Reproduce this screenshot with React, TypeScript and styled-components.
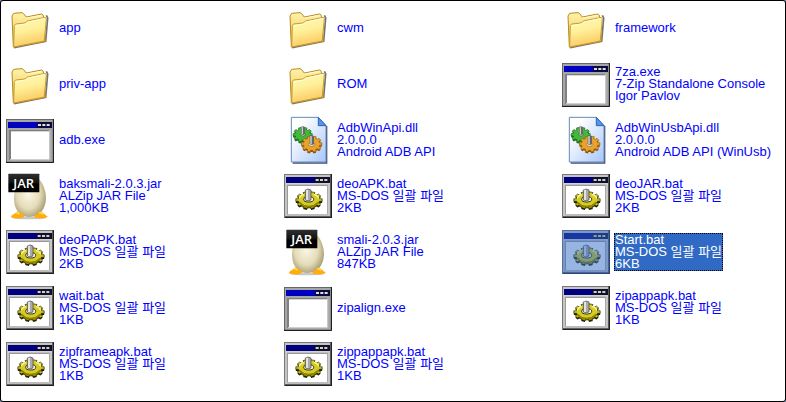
import React from "react";
import styled, { createGlobalStyle } from "styled-components";

const GlobalStyle = createGlobalStyle`
  * { box-sizing: border-box; }
  html, body, #root { height: 100%; }
  body { margin: 0; background: #6c8ccc; }
`;

const Pane = styled.main`
  min-height: 100%;
  background: #ffffff;
  box-shadow: inset 0 0 0 1px #000000;
  border-radius: 3px;
  font-family: "Liberation Sans", "Noto Sans CJK KR", sans-serif;
  font-size: 13px;
  line-height: 12px;
`;

const FileGrid = styled.ul`
  display: grid;
  grid-template-columns: repeat(3, minmax(0, 1fr));
  column-gap: 56px;
  grid-auto-rows: 56px;
  margin: 0;
  padding: 0 2px 0 6px;
  list-style: none;
`;

const Cell = styled.li`
  display: flex;
  align-items: center;
`;

const Tile = styled.button`
  display: flex;
  align-items: center;
  gap: 4px;
  padding: 0;
  border: 0;
  background: none;
  font: inherit;
  text-align: left;
  cursor: default;
`;

const Glyph = styled.svg`
  flex: none;
  width: 48px;
  height: 48px;
`;

const Label = styled.span<{ $selected: boolean }>`
  display: flex;
  flex-direction: column;
  border: 1px dotted ${(p) => (p.$selected ? "#000000" : "transparent")};
  background: ${(p) => (p.$selected ? "#316ac5" : "transparent")};
  color: ${(p) => (p.$selected ? "#ffffff" : "#0000ff")};
  white-space: nowrap;
`;

type Kind = "folder" | "exe" | "bat" | "dll" | "jar";

function gearPath(cx: number, cy: number, rx: number, ry: number, teeth: number) {
  const points: string[] = [];
  const step = (Math.PI * 2) / teeth;
  for (let i = 0; i < teeth; i++) {
    const shape: [number, number][] = [[-0.3, 0.8], [-0.24, 1], [0.24, 1], [0.3, 0.8]];
    shape.forEach(([turn, r]) => {
      const a = (i + turn) * step;
      points.push(`${(cx + Math.cos(a) * rx * r).toFixed(1)} ${(cy + Math.sin(a) * ry * r).toFixed(1)}`);
    });
  }
  return `M${points.join("L")}Z`;
}

function Folder() {
  return (
    <>
      <defs>
        <linearGradient id="folderFront" x1="0" y1="0" x2="0.25" y2="1">
          <stop offset="0" stopColor="#fffbb8" />
          <stop offset="0.5" stopColor="#fff09a" />
          <stop offset="1" stopColor="#fccb63" />
        </linearGradient>
        <linearGradient id="folderBack" x1="0" y1="0" x2="0" y2="1">
          <stop offset="0" stopColor="#fff3a8" />
          <stop offset="1" stopColor="#e9bd4e" />
        </linearGradient>
      </defs>
      <path d="M24 131L119 112L125 42L121 34" fill="none" stroke="#444444" strokeOpacity="0.75" strokeWidth="5" />
      <path d="M18 36L23 28L48 26L53 29L61 39L107 30L112 34L113 44L118 112L22 129Z" fill="url(#folderBack)" stroke="#b8891d" strokeWidth="3" strokeLinejoin="round" />
      <path d="M62 42L106 34" stroke="#fffbd1" strokeWidth="3" />
      <path d="M23 129L25 64L29 60L57 57L65 51L118 40L121 44L115 109L111 112Z" fill="url(#folderFront)" stroke="#c89b2c" strokeWidth="3" strokeLinejoin="round" />
      <path d="M28 66L58 60L67 54L117 43" fill="none" stroke="#fffddc" strokeWidth="3" />
    </>
  );
}

function Gear({ cx, cy, rx, ry, color, edge }: { cx: number; cy: number; rx: number; ry: number; color: string; edge: string }) {
  return (
    <>
      <path d={gearPath(cx, cy + 5, rx, ry, 10)} fill={edge} />
      <path d={gearPath(cx, cy, rx, ry, 10)} fill={color} stroke={edge} strokeWidth="2" />
    </>
  );
}

function BatWindow() {
  return (
    <>
      <rect x="0" y="6" width="144" height="132" fill="#777777" />
      <rect x="3" y="9" width="135" height="123" fill="#c5c5c5" />
      <path d="M142 6V136H3" fill="none" stroke="#222222" strokeWidth="4" />
      <rect x="6" y="15" width="132" height="18" fill="#00007f" />
      <path d="M92 15H138V33H92Z" fill="#101028" />
      <path d="M95 21H104V27H95ZM108 21H117V27H108ZM121 21H130V27H121Z" fill="#d0d0d0" />
      <rect x="6" y="34" width="132" height="4" fill="#d8d8d8" />
      <rect x="9" y="38" width="125" height="94" fill="#999999" />
      <rect x="12" y="42" width="117" height="84" fill="#ffffff" />
      <path d="M133 39V129H9" fill="none" stroke="#c8c8c8" strokeWidth="4" />
    </>
  );
}

function Exe() {
  return (
    <>
      <rect x="0" y="9" width="144" height="132" fill="#666666" />
      <rect x="3" y="12" width="138" height="126" fill="#a6a6a6" />
      <path d="M142 9V139H0" fill="none" stroke="#111111" strokeWidth="3" />
      <rect x="6" y="18" width="132" height="18" fill="#0000bf" />
      <path d="M93 18H138V36H93Z" fill="#0a0a3c" />
      <path d="M96 24H105V30H96ZM109 24H118V30H109ZM122 24H131V30H122Z" fill="#e0e0e0" />
      <rect x="9" y="42" width="123" height="90" fill="#808080" />
      <rect x="15" y="46" width="114" height="84" fill="#ffffff" />
      <path d="M131 43V131H12" fill="none" stroke="#d6d6d6" strokeWidth="3" />
    </>
  );
}

function Bat() {
  return (
    <>
      <BatWindow />
      <Gear cx={75} cy={84} rx={40} ry={25} color="#d6cb24" edge="#242400" />
      <ellipse cx="74" cy="82" rx="15" ry="8" fill="#ffffff" stroke="#302e00" strokeWidth="3" />
      <path d="M45 79Q50 69 61 67M89 67Q100 69 105 79" fill="none" stroke="#fffb7a" strokeWidth="4" />
      <path d="M47 92L58 101L74 104L91 101L103 92" fill="none" stroke="#8d8300" strokeWidth="6" />
      <path d="M64 54Q72 48 81 54V84Q73 89 64 84Z" fill="#aaaaaa" stroke="#444444" strokeWidth="2" />
      <path d="M69 53V84" stroke="#eeeeee" strokeWidth="5" />
    </>
  );
}

function Dll() {
  return (
    <>
      <defs>
        <linearGradient id="page" x1="0" y1="0" x2="1" y2="1">
          <stop offset="0.2" stopColor="#ffffff" />
          <stop offset="1" stopColor="#a6c6fb" />
        </linearGradient>
      </defs>
      <path d="M26 141H128V30" fill="none" stroke="#444f70" strokeWidth="4" />
      <path d="M22 4H103L126 29V138H22Z" fill="url(#page)" stroke="#6788bd" strokeWidth="3" />
      <path d="M103 4L126 29H103Z" fill="#4f98f1" stroke="#2f61b4" strokeWidth="3" />
      <Gear cx={56} cy={56} rx={29} ry={22} color="#43b83b" edge="#176c1a" />
      <ellipse cx="57" cy="55" rx="7" ry="5" fill="#e5f1e3" stroke="#17701c" strokeWidth="2" />
      <path d="M51 33Q56 28 63 33V55Q57 59 51 55Z" fill="#666666" />
      <path d="M55 33V55" stroke="#cccccc" strokeWidth="4" />
      <Gear cx={83} cy={84} rx={31} ry={24} color="#e7a32d" edge="#8f5807" />
      <ellipse cx="83" cy="85" rx="9" ry="6" fill="#fff4d5" stroke="#8f5807" strokeWidth="2" />
      <path d="M77 61Q83 56 90 61V85Q83 89 77 85Z" fill="#666666" />
      <path d="M81 60V85" stroke="#dddddd" strokeWidth="4" />
    </>
  );
}

function Jar() {
  return (
    <>
      <defs>
        <radialGradient id="egg" cx="0.45" cy="0.45" r="0.6">
          <stop offset="0" stopColor="#fbf7e6" />
          <stop offset="0.6" stopColor="#e4dcb9" />
          <stop offset="1" stopColor="#a59b70" />
        </radialGradient>
        <linearGradient id="tag" x1="0" y1="0" x2="0" y2="1">
          <stop offset="0" stopColor="#303030" />
          <stop offset="0.5" stopColor="#111111" />
          <stop offset="0.55" stopColor="#000000" />
        </linearGradient>
      </defs>
      <ellipse cx="70" cy="138" rx="50" ry="4" fill="#c8c8c8" />
      <path d="M70 8C102 8 120 47 120 79C119 114 99 135 71 135C43 135 24 114 24 80C24 47 40 8 70 8Z" fill="url(#egg)" />
      <path d="M15 136C16 126 28 127 32 119C43 117 46 127 56 132C54 141 22 141 15 136Z" fill="#ffad0d" />
      <path d="M84 136C86 129 96 127 101 119C112 118 113 127 125 133C124 141 91 141 84 136Z" fill="#ffad0d" />
      <path d="M29 123Q36 120 40 127M99 123Q107 120 111 127" fill="none" stroke="#ffe463" strokeWidth="4" />
      <rect x="7" y="5" width="93" height="56" rx="2" fill="url(#tag)" />
      <text x="53" y="47" textAnchor="middle" fontFamily="Open Sans, sans-serif" fontSize="39" fontWeight="600" fill="#ffffff">JAR</text>
    </>
  );
}

const drawings: Record<Kind, () => React.ReactElement> = {
  folder: Folder,
  exe: Exe,
  bat: Bat,
  dll: Dll,
  jar: Jar,
};

interface Entry {
  kind: Kind;
  lines: string[];
}

const bat = (name: string, size: string): Entry => ({ kind: "bat", lines: [name, "MS-DOS 일괄 파일", size] });

const entries: Entry[] = [
  { kind: "folder", lines: ["app"] },
  { kind: "folder", lines: ["cwm"] },
  { kind: "folder", lines: ["framework"] },
  { kind: "folder", lines: ["priv-app"] },
  { kind: "folder", lines: ["ROM"] },
  { kind: "exe", lines: ["7za.exe", "7-Zip Standalone Console", "Igor Pavlov"] },
  { kind: "exe", lines: ["adb.exe"] },
  { kind: "dll", lines: ["AdbWinApi.dll", "2.0.0.0", "Android ADB API"] },
  { kind: "dll", lines: ["AdbWinUsbApi.dll", "2.0.0.0", "Android ADB API (WinUsb)"] },
  { kind: "jar", lines: ["baksmali-2.0.3.jar", "ALZip JAR File", "1,000KB"] },
  bat("deoAPK.bat", "2KB"),
  bat("deoJAR.bat", "2KB"),
  bat("deoPAPK.bat", "2KB"),
  { kind: "jar", lines: ["smali-2.0.3.jar", "ALZip JAR File", "847KB"] },
  bat("Start.bat", "6KB"),
  bat("wait.bat", "1KB"),
  { kind: "exe", lines: ["zipalign.exe"] },
  bat("zipappapk.bat", "1KB"),
  bat("zipframeapk.bat", "1KB"),
  bat("zippappapk.bat", "1KB"),
];

export default function App() {
  const [selected, setSelected] = React.useState("Start.bat");
  return (
    <>
      <GlobalStyle />
      <Pane>
        <FileGrid>
          {entries.map(({ kind, lines }) => {
            const Drawing = drawings[kind];
            const active = lines[0] === selected;
            return (
              <Cell key={lines[0]}>
                <Tile type="button" aria-pressed={active} onClick={() => setSelected(lines[0])}>
                  <Glyph viewBox="0 0 144 144" aria-hidden="true">
                    <Drawing />
                    {active && <rect x="0" y="6" width="144" height="132" fill="#316ac5" fillOpacity="0.5" />}
                  </Glyph>
                  <Label $selected={active}>
                    {lines.map((line) => (
                      <span key={line}>{line}</span>
                    ))}
                  </Label>
                </Tile>
              </Cell>
            );
          })}
        </FileGrid>
      </Pane>
    </>
  );
}
